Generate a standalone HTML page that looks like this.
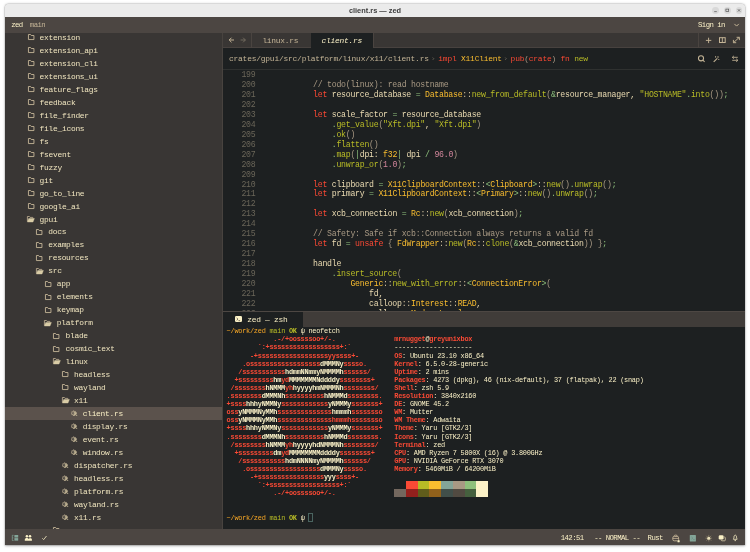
<!DOCTYPE html>
<html><head><meta charset="utf-8"><title>client.rs — zed</title>
<style>
html,body{margin:0;padding:0;}
body{width:750px;height:552px;background:#fff;overflow:hidden;position:relative;font-family:"Liberation Mono",monospace;}
.abs{position:absolute;}
#win{position:absolute;left:4.7px;top:3.55px;width:740.3px;height:541.85px;background:#ebebeb;border-radius:3.5px 3.5px 0 0;overflow:hidden;box-shadow:0 0 0 0.3px rgba(0,0,0,.18),0 0.8px 2.5px rgba(0,0,0,.35);}
#in{will-change:transform;position:absolute;left:-4.7px;top:-3.55px;width:750px;height:552px;}
.mono{font-family:"Liberation Mono",monospace;white-space:pre;}
.ed{font-size:8.200px;letter-spacing:-0.2508px;line-height:10px;height:10px;color:#ebdbb2;}
.sb{font-size:7.900px;letter-spacing:-0.2608px;line-height:13px;height:13px;color:#f0e5bf;}
.tb{font-size:7.3px;letter-spacing:-0.5507px;line-height:10px;height:10px;color:#fbf1c7;}
.tm{font-size:6.900px;letter-spacing:-0.2407px;line-height:8px;height:8px;color:#fbf1c7;}
.k{color:#fb4934}.t{color:#fabd2f}.f{color:#b8bb26}.s{color:#b8bb26}.c{color:#a89984}.n{color:#d3869b}
.o{color:#8ec07c}.b{color:#a89984}.p{color:#d5c4a1}.d{color:#e5d5ad}
.r{color:#fb4a35;font-weight:bold}.w{color:#fbf1c7}.g{color:#b7bb26}.y{color:#f9a825}
.ln{color:#6b6659;}
svg{position:absolute;overflow:visible}
</style></head><body>
<div id="win"><div id="in">
<div class="abs" style="left:0.00px;top:0.00px;width:750.00px;height:17.50px;background:#ebebeb;"></div>
<div class="abs" style="left:0.00px;top:16.80px;width:750.00px;height:16.20px;background:#4c4642;"></div>
<div class="abs" style="left:0.00px;top:32.50px;width:222.50px;height:497.00px;background:#393634;"></div>
<div class="abs" style="left:222.00px;top:47.00px;width:530.00px;height:483.00px;background:#1d2021;"></div>
<div class="abs" style="left:222.00px;top:32.50px;width:530.00px;height:15.60px;background:#393634;"></div>
<div class="abs" style="left:222.60px;top:47.40px;width:530.00px;height:0.70px;background:#48423f;"></div>
<div class="abs" style="left:251.00px;top:33.00px;width:0.70px;height:15.00px;background:#4a4440;"></div>
<div class="abs" style="left:310.60px;top:33.00px;width:0.70px;height:15.00px;background:#4a4440;"></div>
<div class="abs" style="left:311.20px;top:33.00px;width:61.80px;height:15.40px;background:#1d2021;"></div>
<div class="abs" style="left:373.00px;top:33.00px;width:0.70px;height:15.00px;background:#4a4440;"></div>
<div class="abs" style="left:698.10px;top:33.00px;width:0.70px;height:15.00px;background:#4a4440;"></div>
<div class="abs" style="left:222.60px;top:68.60px;width:530.00px;height:0.70px;background:#2f3130;"></div>
<div class="abs" style="left:222.60px;top:310.80px;width:530.00px;height:1.10px;background:#4d4743;"></div>
<div class="abs" style="left:222.60px;top:311.80px;width:530.00px;height:15.00px;background:#403c39;"></div>
<div class="abs" style="left:222.60px;top:311.90px;width:80.40px;height:15.20px;background:#1d2021;"></div>
<div class="abs" style="left:222.30px;top:33.00px;width:0.90px;height:496.00px;background:#48433f;"></div>
<div class="abs" style="left:0.00px;top:528.90px;width:750.00px;height:20.00px;background:#4c4642;"></div>
<div class="abs" style="left:300px;top:5.2px;width:150px;height:12px;line-height:12px;text-align:center;font-family:'Liberation Sans',sans-serif;font-weight:bold;font-size:7.4px;color:#3d3d3d;">client.rs — zed</div>
<div class="abs" style="left:712.10px;top:6.90px;width:6.8px;height:6.8px;border-radius:50%;background:#d9d9d9;"></div>
<div class="abs" style="left:723.90px;top:6.90px;width:6.8px;height:6.8px;border-radius:50%;background:#d9d9d9;"></div>
<div class="abs" style="left:735.60px;top:6.90px;width:6.8px;height:6.8px;border-radius:50%;background:#d9d9d9;"></div>
<svg style="left:0;top:0" width="750" height="20"><g stroke="#4a4a4a" stroke-width="0.65" fill="none"><path d="M714.2 11.6h2.6"/><rect x="725.9" y="9.1" width="2.8" height="2.5"/><path d="M737.8 9.2l2.4 2.4M740.2 9.2l-2.4 2.4"/></g></svg>
<div class="abs mono tb" style="left:11.20px;top:20px;color:#fbf1c7">zed</div>
<div class="abs mono tb" style="left:29.80px;top:20px;color:#c5b597">main</div>
<div class="abs mono tb" style="left:698.00px;top:20px;color:#fbf1c7">Sign in</div>
<svg style="left:0;top:0" width="750" height="40"><path d="M734.4 23.9l2.2 2.2 2.2-2.2" stroke="#c5b597" stroke-width="1" fill="none"/></svg>
<div class="abs" style="left:0;top:33px;width:221.8px;height:496px;overflow:hidden;"><div class="abs" style="left:0;top:-33px;width:222px;height:552px;">
<svg style="left:27.55px;top:34.35px" width="8" height="7" viewBox="0 0 8 7"><path d="M0.45 0.5h2.1l0.7 1h2.7v4.05h-5.5z" fill="none" stroke="#c5b597" stroke-width="0.9" stroke-linejoin="round"/></svg><div class="abs mono sb" style="left:39.60px;top:31px;">extension</div>
<svg style="left:27.55px;top:47.31px" width="8" height="7" viewBox="0 0 8 7"><path d="M0.45 0.5h2.1l0.7 1h2.7v4.05h-5.5z" fill="none" stroke="#c5b597" stroke-width="0.9" stroke-linejoin="round"/></svg><div class="abs mono sb" style="left:39.60px;top:44px;">extension_api</div>
<svg style="left:27.55px;top:60.28px" width="8" height="7" viewBox="0 0 8 7"><path d="M0.45 0.5h2.1l0.7 1h2.7v4.05h-5.5z" fill="none" stroke="#c5b597" stroke-width="0.9" stroke-linejoin="round"/></svg><div class="abs mono sb" style="left:39.60px;top:57px;">extension_cli</div>
<svg style="left:27.55px;top:73.24px" width="8" height="7" viewBox="0 0 8 7"><path d="M0.45 0.5h2.1l0.7 1h2.7v4.05h-5.5z" fill="none" stroke="#c5b597" stroke-width="0.9" stroke-linejoin="round"/></svg><div class="abs mono sb" style="left:39.60px;top:70px;">extensions_ui</div>
<svg style="left:27.55px;top:86.21px" width="8" height="7" viewBox="0 0 8 7"><path d="M0.45 0.5h2.1l0.7 1h2.7v4.05h-5.5z" fill="none" stroke="#c5b597" stroke-width="0.9" stroke-linejoin="round"/></svg><div class="abs mono sb" style="left:39.60px;top:83px;">feature_flags</div>
<svg style="left:27.55px;top:99.17px" width="8" height="7" viewBox="0 0 8 7"><path d="M0.45 0.5h2.1l0.7 1h2.7v4.05h-5.5z" fill="none" stroke="#c5b597" stroke-width="0.9" stroke-linejoin="round"/></svg><div class="abs mono sb" style="left:39.60px;top:96px;">feedback</div>
<svg style="left:27.55px;top:112.14px" width="8" height="7" viewBox="0 0 8 7"><path d="M0.45 0.5h2.1l0.7 1h2.7v4.05h-5.5z" fill="none" stroke="#c5b597" stroke-width="0.9" stroke-linejoin="round"/></svg><div class="abs mono sb" style="left:39.60px;top:109px;">file_finder</div>
<svg style="left:27.55px;top:125.11px" width="8" height="7" viewBox="0 0 8 7"><path d="M0.45 0.5h2.1l0.7 1h2.7v4.05h-5.5z" fill="none" stroke="#c5b597" stroke-width="0.9" stroke-linejoin="round"/></svg><div class="abs mono sb" style="left:39.60px;top:122px;">file_icons</div>
<svg style="left:27.55px;top:138.07px" width="8" height="7" viewBox="0 0 8 7"><path d="M0.45 0.5h2.1l0.7 1h2.7v4.05h-5.5z" fill="none" stroke="#c5b597" stroke-width="0.9" stroke-linejoin="round"/></svg><div class="abs mono sb" style="left:39.60px;top:135px;">fs</div>
<svg style="left:27.55px;top:151.03px" width="8" height="7" viewBox="0 0 8 7"><path d="M0.45 0.5h2.1l0.7 1h2.7v4.05h-5.5z" fill="none" stroke="#c5b597" stroke-width="0.9" stroke-linejoin="round"/></svg><div class="abs mono sb" style="left:39.60px;top:148px;">fsevent</div>
<svg style="left:27.55px;top:164.00px" width="8" height="7" viewBox="0 0 8 7"><path d="M0.45 0.5h2.1l0.7 1h2.7v4.05h-5.5z" fill="none" stroke="#c5b597" stroke-width="0.9" stroke-linejoin="round"/></svg><div class="abs mono sb" style="left:39.60px;top:161px;">fuzzy</div>
<svg style="left:27.55px;top:176.97px" width="8" height="7" viewBox="0 0 8 7"><path d="M0.45 0.5h2.1l0.7 1h2.7v4.05h-5.5z" fill="none" stroke="#c5b597" stroke-width="0.9" stroke-linejoin="round"/></svg><div class="abs mono sb" style="left:39.60px;top:174px;">git</div>
<svg style="left:27.55px;top:189.93px" width="8" height="7" viewBox="0 0 8 7"><path d="M0.45 0.5h2.1l0.7 1h2.7v4.05h-5.5z" fill="none" stroke="#c5b597" stroke-width="0.9" stroke-linejoin="round"/></svg><div class="abs mono sb" style="left:39.60px;top:187px;">go_to_line</div>
<svg style="left:27.55px;top:202.89px" width="8" height="7" viewBox="0 0 8 7"><path d="M0.45 0.5h2.1l0.7 1h2.7v4.05h-5.5z" fill="none" stroke="#c5b597" stroke-width="0.9" stroke-linejoin="round"/></svg><div class="abs mono sb" style="left:39.60px;top:200px;">google_ai</div>
<svg style="left:27.10px;top:215.86px" width="8" height="7" viewBox="0 0 8 7"><path d="M0.4 5.4v-4.9h2l0.7 0.9h2.7v1.1" fill="none" stroke="#c5b597" stroke-width="0.8" stroke-linejoin="round"/><path d="M1.7 2.5h5.7l-1.4 3.5h-5.6z" fill="#d9cca6" stroke="#d9cca6" stroke-width="0.4" stroke-linejoin="round"/></svg><div class="abs mono sb" style="left:39.60px;top:213px;">gpui</div>
<svg style="left:36.17px;top:228.82px" width="8" height="7" viewBox="0 0 8 7"><path d="M0.45 0.5h2.1l0.7 1h2.7v4.05h-5.5z" fill="none" stroke="#c5b597" stroke-width="0.9" stroke-linejoin="round"/></svg><div class="abs mono sb" style="left:48.22px;top:225px;">docs</div>
<svg style="left:36.17px;top:241.79px" width="8" height="7" viewBox="0 0 8 7"><path d="M0.45 0.5h2.1l0.7 1h2.7v4.05h-5.5z" fill="none" stroke="#c5b597" stroke-width="0.9" stroke-linejoin="round"/></svg><div class="abs mono sb" style="left:48.22px;top:238px;">examples</div>
<svg style="left:36.17px;top:254.75px" width="8" height="7" viewBox="0 0 8 7"><path d="M0.45 0.5h2.1l0.7 1h2.7v4.05h-5.5z" fill="none" stroke="#c5b597" stroke-width="0.9" stroke-linejoin="round"/></svg><div class="abs mono sb" style="left:48.22px;top:251px;">resources</div>
<svg style="left:35.72px;top:267.72px" width="8" height="7" viewBox="0 0 8 7"><path d="M0.4 5.4v-4.9h2l0.7 0.9h2.7v1.1" fill="none" stroke="#c5b597" stroke-width="0.8" stroke-linejoin="round"/><path d="M1.7 2.5h5.7l-1.4 3.5h-5.6z" fill="#d9cca6" stroke="#d9cca6" stroke-width="0.4" stroke-linejoin="round"/></svg><div class="abs mono sb" style="left:48.22px;top:264px;">src</div>
<svg style="left:44.79px;top:280.69px" width="8" height="7" viewBox="0 0 8 7"><path d="M0.45 0.5h2.1l0.7 1h2.7v4.05h-5.5z" fill="none" stroke="#c5b597" stroke-width="0.9" stroke-linejoin="round"/></svg><div class="abs mono sb" style="left:56.84px;top:277px;">app</div>
<svg style="left:44.79px;top:293.65px" width="8" height="7" viewBox="0 0 8 7"><path d="M0.45 0.5h2.1l0.7 1h2.7v4.05h-5.5z" fill="none" stroke="#c5b597" stroke-width="0.9" stroke-linejoin="round"/></svg><div class="abs mono sb" style="left:56.84px;top:290px;">elements</div>
<svg style="left:44.79px;top:306.61px" width="8" height="7" viewBox="0 0 8 7"><path d="M0.45 0.5h2.1l0.7 1h2.7v4.05h-5.5z" fill="none" stroke="#c5b597" stroke-width="0.9" stroke-linejoin="round"/></svg><div class="abs mono sb" style="left:56.84px;top:303px;">keymap</div>
<svg style="left:44.34px;top:319.58px" width="8" height="7" viewBox="0 0 8 7"><path d="M0.4 5.4v-4.9h2l0.7 0.9h2.7v1.1" fill="none" stroke="#c5b597" stroke-width="0.8" stroke-linejoin="round"/><path d="M1.7 2.5h5.7l-1.4 3.5h-5.6z" fill="#d9cca6" stroke="#d9cca6" stroke-width="0.4" stroke-linejoin="round"/></svg><div class="abs mono sb" style="left:56.84px;top:316px;">platform</div>
<svg style="left:53.41px;top:332.54px" width="8" height="7" viewBox="0 0 8 7"><path d="M0.45 0.5h2.1l0.7 1h2.7v4.05h-5.5z" fill="none" stroke="#c5b597" stroke-width="0.9" stroke-linejoin="round"/></svg><div class="abs mono sb" style="left:65.46px;top:329px;">blade</div>
<svg style="left:53.41px;top:345.51px" width="8" height="7" viewBox="0 0 8 7"><path d="M0.45 0.5h2.1l0.7 1h2.7v4.05h-5.5z" fill="none" stroke="#c5b597" stroke-width="0.9" stroke-linejoin="round"/></svg><div class="abs mono sb" style="left:65.46px;top:342px;">cosmic_text</div>
<svg style="left:52.96px;top:358.47px" width="8" height="7" viewBox="0 0 8 7"><path d="M0.4 5.4v-4.9h2l0.7 0.9h2.7v1.1" fill="none" stroke="#c5b597" stroke-width="0.8" stroke-linejoin="round"/><path d="M1.7 2.5h5.7l-1.4 3.5h-5.6z" fill="#d9cca6" stroke="#d9cca6" stroke-width="0.4" stroke-linejoin="round"/></svg><div class="abs mono sb" style="left:65.46px;top:355px;">linux</div>
<svg style="left:62.03px;top:371.44px" width="8" height="7" viewBox="0 0 8 7"><path d="M0.45 0.5h2.1l0.7 1h2.7v4.05h-5.5z" fill="none" stroke="#c5b597" stroke-width="0.9" stroke-linejoin="round"/></svg><div class="abs mono sb" style="left:74.08px;top:368px;">headless</div>
<svg style="left:62.03px;top:384.40px" width="8" height="7" viewBox="0 0 8 7"><path d="M0.45 0.5h2.1l0.7 1h2.7v4.05h-5.5z" fill="none" stroke="#c5b597" stroke-width="0.9" stroke-linejoin="round"/></svg><div class="abs mono sb" style="left:74.08px;top:381px;">wayland</div>
<svg style="left:61.58px;top:397.37px" width="8" height="7" viewBox="0 0 8 7"><path d="M0.4 5.4v-4.9h2l0.7 0.9h2.7v1.1" fill="none" stroke="#c5b597" stroke-width="0.8" stroke-linejoin="round"/><path d="M1.7 2.5h5.7l-1.4 3.5h-5.6z" fill="#d9cca6" stroke="#d9cca6" stroke-width="0.4" stroke-linejoin="round"/></svg><div class="abs mono sb" style="left:74.08px;top:394px;">x11</div>
<div class="abs" style="left:0.00px;top:406.88px;width:222.00px;height:12.96px;background:#5b524c;"></div>
<svg style="left:70.70px;top:410.33px" width="8" height="7" viewBox="0 0 8 7"><circle cx="2.7" cy="3.2" r="2.05" fill="none" stroke="#c5b597" stroke-width="1.15" stroke-dasharray="0.85 0.5"/><path d="M3.2 2v3.9M3.2 2.2h1.3a0.9 0.9 0 0 1 0 1.8h-1.3M4.4 4l1.7 2" stroke="#d9cca6" stroke-width="0.75" fill="none"/></svg><div class="abs mono sb" style="left:82.70px;top:407px;color:#fbf1c7">client.rs</div>
<svg style="left:70.70px;top:423.30px" width="8" height="7" viewBox="0 0 8 7"><circle cx="2.7" cy="3.2" r="2.05" fill="none" stroke="#c5b597" stroke-width="1.15" stroke-dasharray="0.85 0.5"/><path d="M3.2 2v3.9M3.2 2.2h1.3a0.9 0.9 0 0 1 0 1.8h-1.3M4.4 4l1.7 2" stroke="#d9cca6" stroke-width="0.75" fill="none"/></svg><div class="abs mono sb" style="left:82.70px;top:420px;">display.rs</div>
<svg style="left:70.70px;top:436.26px" width="8" height="7" viewBox="0 0 8 7"><circle cx="2.7" cy="3.2" r="2.05" fill="none" stroke="#c5b597" stroke-width="1.15" stroke-dasharray="0.85 0.5"/><path d="M3.2 2v3.9M3.2 2.2h1.3a0.9 0.9 0 0 1 0 1.8h-1.3M4.4 4l1.7 2" stroke="#d9cca6" stroke-width="0.75" fill="none"/></svg><div class="abs mono sb" style="left:82.70px;top:433px;">event.rs</div>
<svg style="left:70.70px;top:449.23px" width="8" height="7" viewBox="0 0 8 7"><circle cx="2.7" cy="3.2" r="2.05" fill="none" stroke="#c5b597" stroke-width="1.15" stroke-dasharray="0.85 0.5"/><path d="M3.2 2v3.9M3.2 2.2h1.3a0.9 0.9 0 0 1 0 1.8h-1.3M4.4 4l1.7 2" stroke="#d9cca6" stroke-width="0.75" fill="none"/></svg><div class="abs mono sb" style="left:82.70px;top:446px;">window.rs</div>
<svg style="left:62.08px;top:462.19px" width="8" height="7" viewBox="0 0 8 7"><circle cx="2.7" cy="3.2" r="2.05" fill="none" stroke="#c5b597" stroke-width="1.15" stroke-dasharray="0.85 0.5"/><path d="M3.2 2v3.9M3.2 2.2h1.3a0.9 0.9 0 0 1 0 1.8h-1.3M4.4 4l1.7 2" stroke="#d9cca6" stroke-width="0.75" fill="none"/></svg><div class="abs mono sb" style="left:74.08px;top:459px;">dispatcher.rs</div>
<svg style="left:62.08px;top:475.16px" width="8" height="7" viewBox="0 0 8 7"><circle cx="2.7" cy="3.2" r="2.05" fill="none" stroke="#c5b597" stroke-width="1.15" stroke-dasharray="0.85 0.5"/><path d="M3.2 2v3.9M3.2 2.2h1.3a0.9 0.9 0 0 1 0 1.8h-1.3M4.4 4l1.7 2" stroke="#d9cca6" stroke-width="0.75" fill="none"/></svg><div class="abs mono sb" style="left:74.08px;top:472px;">headless.rs</div>
<svg style="left:62.08px;top:488.12px" width="8" height="7" viewBox="0 0 8 7"><circle cx="2.7" cy="3.2" r="2.05" fill="none" stroke="#c5b597" stroke-width="1.15" stroke-dasharray="0.85 0.5"/><path d="M3.2 2v3.9M3.2 2.2h1.3a0.9 0.9 0 0 1 0 1.8h-1.3M4.4 4l1.7 2" stroke="#d9cca6" stroke-width="0.75" fill="none"/></svg><div class="abs mono sb" style="left:74.08px;top:485px;">platform.rs</div>
<svg style="left:62.08px;top:501.09px" width="8" height="7" viewBox="0 0 8 7"><circle cx="2.7" cy="3.2" r="2.05" fill="none" stroke="#c5b597" stroke-width="1.15" stroke-dasharray="0.85 0.5"/><path d="M3.2 2v3.9M3.2 2.2h1.3a0.9 0.9 0 0 1 0 1.8h-1.3M4.4 4l1.7 2" stroke="#d9cca6" stroke-width="0.75" fill="none"/></svg><div class="abs mono sb" style="left:74.08px;top:498px;">wayland.rs</div>
<svg style="left:62.08px;top:514.05px" width="8" height="7" viewBox="0 0 8 7"><circle cx="2.7" cy="3.2" r="2.05" fill="none" stroke="#c5b597" stroke-width="1.15" stroke-dasharray="0.85 0.5"/><path d="M3.2 2v3.9M3.2 2.2h1.3a0.9 0.9 0 0 1 0 1.8h-1.3M4.4 4l1.7 2" stroke="#d9cca6" stroke-width="0.75" fill="none"/></svg><div class="abs mono sb" style="left:74.08px;top:511px;">x11.rs</div>
<svg style="left:53.41px;top:527.02px" width="8" height="7" viewBox="0 0 8 7"><path d="M0.45 0.5h2.1l0.7 1h2.7v4.05h-5.5z" fill="none" stroke="#c5b597" stroke-width="0.9" stroke-linejoin="round"/></svg><div class="abs mono sb" style="left:65.46px;top:524px;">mac</div>
</div></div>
<div class="abs mono sb" style="left:262.40px;top:34px;color:#c5b597">linux.rs</div>
<div class="abs mono sb" style="left:321.60px;top:34px;color:#fbf1c7;font-style:italic">client.rs</div>
<svg style="left:0;top:0" width="750" height="70"><g fill="none" stroke-width="0.85" stroke="#c5b597"><path d="M229.2 40h4.8M231.5 37.7l-2.3 2.3 2.3 2.3" stroke-width="0.95"/><path d="M240.6 40h4.8M243.1 37.7l2.3 2.3-2.3 2.3" stroke="#7a7163"/><path d="M705.9 40.4h5.4M708.6 37.7v5.4" stroke-width="0.95"/><rect x="719.5" y="37.7" width="5.7" height="4.8" stroke-width="1"/><path d="M722.35 37.7v4.8" stroke-width="0.9"/><path d="M733.6 42.6l5.6-5.2M736.6 37.3h2.8v2.8M733.4 39.9v2.8h2.8" stroke-width="0.95"/><circle cx="701" cy="58.3" r="2.55" stroke-width="1.05"/><path d="M702.9 60.2l1.7 1.6" stroke-width="1.05"/><path d="M713.7 61.9l3.6-3.6" stroke-width="1.05"/><path d="M715.6 56v1.7M718 56v2.1" stroke-width="0.8"/><circle cx="718.8" cy="59.5" r="0.6" fill="#c5b597" stroke="none"/><path d="M732.4 57.3h5.4M737.8 60.3h-5.6M733.9 55.9l-1.6 1.4 1.6 1.4M736.2 58.8l1.7 1.5-1.7 1.5" stroke-width="0.85"/></g></svg>
<div class="abs mono sb" style="left:229.00px;top:52px;letter-spacing:-0.1958px"><span style="color:#c5b597">crates/gpui/src/platform/linux/x11/client.rs</span></div>
<div class="abs mono sb" style="left:438.30px;top:52px;letter-spacing:-0.1958px"><span class="k">impl</span> <span class="t">X11Client</span></div>
<div class="abs mono sb" style="left:510.60px;top:52px;letter-spacing:-0.1958px"><span class="k">pub</span><span class="b">(</span><span class="k">crate</span><span class="b">)</span> <span class="k">fn</span> <span class="f">new</span></div>
<svg style="left:0;top:0" width="750" height="70"><path d="M432.7 57.5l1.1 1.2-1.1 1.2M505.2 57.5l1.1 1.2-1.1 1.2" stroke="#857a69" stroke-width="0.65" fill="none"/></svg>
<div class="abs" style="left:222.6px;top:69.3px;width:530px;height:241.6px;overflow:hidden;"><div class="abs" style="left:-222.6px;top:-69.3px;width:750px;height:552px;">
<div class="abs mono ed ln" style="left:241.40px;top:70px;">199</div>
<div class="abs mono ed ln" style="left:241.40px;top:80px;">200</div>
<div class="abs mono ed" style="left:275.80px;top:80px;">        <span class="c">// todo(linux): read hostname</span></div>
<div class="abs mono ed ln" style="left:241.40px;top:90px;">201</div>
<div class="abs mono ed" style="left:275.80px;top:90px;">        <span class="k">let</span> resource_database <span class="o">=</span> <span class="t">Database</span><span class="p">::</span><span class="f">new_from_default</span><span class="b">(</span><span class="o">&amp;</span>resource_manager<span class="d">,</span> <span class="s">"HOSTNAME"</span><span class="o">.</span><span class="f">into</span><span class="b">())</span><span class="o">;</span></div>
<div class="abs mono ed ln" style="left:241.40px;top:100px;">202</div>
<div class="abs mono ed ln" style="left:241.40px;top:110px;">203</div>
<div class="abs mono ed" style="left:275.80px;top:110px;">        <span class="k">let</span> scale_factor <span class="o">=</span> resource_database</div>
<div class="abs mono ed ln" style="left:241.40px;top:120px;">204</div>
<div class="abs mono ed" style="left:275.80px;top:120px;">            <span class="o">.</span><span class="f">get_value</span><span class="b">(</span><span class="s">"Xft.dpi"</span><span class="d">,</span> <span class="s">"Xft.dpi"</span><span class="b">)</span></div>
<div class="abs mono ed ln" style="left:241.40px;top:130px;">205</div>
<div class="abs mono ed" style="left:275.80px;top:130px;">            <span class="o">.</span><span class="f">ok</span><span class="b">()</span></div>
<div class="abs mono ed ln" style="left:241.40px;top:140px;">206</div>
<div class="abs mono ed" style="left:275.80px;top:140px;">            <span class="o">.</span><span class="f">flatten</span><span class="b">()</span></div>
<div class="abs mono ed ln" style="left:241.40px;top:150px;">207</div>
<div class="abs mono ed" style="left:275.80px;top:150px;">            <span class="o">.</span><span class="f">map</span><span class="b">(</span><span class="o">|</span>dpi<span class="d">:</span> <span class="t">f32</span><span class="o">|</span> dpi <span class="o">/</span> <span class="n">96.0</span><span class="b">)</span></div>
<div class="abs mono ed ln" style="left:241.40px;top:160px;">208</div>
<div class="abs mono ed" style="left:275.80px;top:160px;">            <span class="o">.</span><span class="f">unwrap_or</span><span class="b">(</span><span class="n">1.0</span><span class="b">)</span><span class="o">;</span></div>
<div class="abs mono ed ln" style="left:241.40px;top:170px;">209</div>
<div class="abs mono ed ln" style="left:241.40px;top:180px;">210</div>
<div class="abs mono ed" style="left:275.80px;top:180px;">        <span class="k">let</span> clipboard <span class="o">=</span> <span class="t">X11ClipboardContext</span><span class="p">::</span><span class="o">&lt;</span><span class="t">Clipboard</span><span class="o">&gt;</span><span class="p">::</span><span class="f">new</span><span class="b">()</span><span class="o">.</span><span class="f">unwrap</span><span class="b">()</span><span class="o">;</span></div>
<div class="abs mono ed ln" style="left:241.40px;top:189px;">211</div>
<div class="abs mono ed" style="left:275.80px;top:189px;">        <span class="k">let</span> primary <span class="o">=</span> <span class="t">X11ClipboardContext</span><span class="p">::</span><span class="o">&lt;</span><span class="t">Primary</span><span class="o">&gt;</span><span class="p">::</span><span class="f">new</span><span class="b">()</span><span class="o">.</span><span class="f">unwrap</span><span class="b">()</span><span class="o">;</span></div>
<div class="abs mono ed ln" style="left:241.40px;top:199px;">212</div>
<div class="abs mono ed ln" style="left:241.40px;top:209px;">213</div>
<div class="abs mono ed" style="left:275.80px;top:209px;">        <span class="k">let</span> xcb_connection <span class="o">=</span> <span class="t">Rc</span><span class="p">::</span><span class="f">new</span><span class="b">(</span>xcb_connection<span class="b">)</span><span class="o">;</span></div>
<div class="abs mono ed ln" style="left:241.40px;top:219px;">214</div>
<div class="abs mono ed ln" style="left:241.40px;top:229px;">215</div>
<div class="abs mono ed" style="left:275.80px;top:229px;">        <span class="c">// Safety: Safe if xcb::Connection always returns a valid fd</span></div>
<div class="abs mono ed ln" style="left:241.40px;top:239px;">216</div>
<div class="abs mono ed" style="left:275.80px;top:239px;">        <span class="k">let</span> fd <span class="o">=</span> <span class="k">unsafe</span> <span class="b">{</span> <span class="t">FdWrapper</span><span class="p">::</span><span class="f">new</span><span class="b">(</span><span class="t">Rc</span><span class="p">::</span><span class="f">clone</span><span class="b">(</span><span class="o">&amp;</span>xcb_connection<span class="b">))</span> <span class="b">}</span><span class="o">;</span></div>
<div class="abs mono ed ln" style="left:241.40px;top:249px;">217</div>
<div class="abs mono ed ln" style="left:241.40px;top:259px;">218</div>
<div class="abs mono ed" style="left:275.80px;top:259px;">        handle</div>
<div class="abs mono ed ln" style="left:241.40px;top:269px;">219</div>
<div class="abs mono ed" style="left:275.80px;top:269px;">            <span class="o">.</span><span class="f">insert_source</span><span class="b">(</span></div>
<div class="abs mono ed ln" style="left:241.40px;top:279px;">220</div>
<div class="abs mono ed" style="left:275.80px;top:279px;">                <span class="t">Generic</span><span class="p">::</span><span class="f">new_with_error</span><span class="p">::</span><span class="o">&lt;</span><span class="t">ConnectionError</span><span class="o">&gt;</span><span class="b">(</span></div>
<div class="abs mono ed ln" style="left:241.40px;top:289px;">221</div>
<div class="abs mono ed" style="left:275.80px;top:289px;">                    fd<span class="d">,</span></div>
<div class="abs mono ed ln" style="left:241.40px;top:299px;">222</div>
<div class="abs mono ed" style="left:275.80px;top:299px;">                    calloop<span class="p">::</span><span class="t">Interest</span><span class="p">::</span><span class="t">READ</span><span class="d">,</span></div>
<div class="abs mono ed ln" style="left:241.40px;top:309px;">223</div>
<div class="abs mono ed" style="left:275.80px;top:309px;">                    calloop<span class="p">::</span><span class="t">Mode</span><span class="p">::</span><span class="t">Level</span><span class="d">,</span></div>
</div></div>
<div class="abs" style="left:235.2px;top:315.9px;width:6.8px;height:6.5px;border-radius:1.2px;background:#fbf1c7;"></div><svg style="left:235.3px;top:315.9px" width="6.6" height="6.6" viewBox="0 0 6.6 6.6"><path d="M1.7 2l1.3 1.2-1.3 1.2M3.5 4.7h1.6" stroke="#393634" stroke-width="0.7" fill="none"/></svg>
<div class="abs mono sb" style="left:247.20px;top:313px;color:#fbf1c7">zed — zsh</div>
<div class="abs mono tm" style="left:226.60px;top:327px;"><span class="y">~/work/zed</span> <span class="g">main</span> <span class="g" style="font-weight:bold">OK</span> ψ neofetch</div>
<div class="abs mono tm" style="left:226.60px;top:335px;"><span class="r">            .-/+oossssoo+/-.</span></div>
<div class="abs mono tm" style="left:226.60px;top:343px;"><span class="r">        `:+ssssssssssssssssss+:`</span></div>
<div class="abs mono tm" style="left:226.60px;top:352px;"><span class="r">      -+ssssssssssssssssssyyssss+-</span></div>
<div class="abs mono tm" style="left:226.60px;top:360px;"><span class="r">    .ossssssssssssssssss</span><span class="w" style="font-weight:bold">dMMMNy</span><span class="r">sssso.</span></div>
<div class="abs mono tm" style="left:226.60px;top:368px;"><span class="r">   /sssssssssss</span><span class="w" style="font-weight:bold">hdmmNNmmyNMMMMh</span><span class="r">ssssss/</span></div>
<div class="abs mono tm" style="left:226.60px;top:376px;"><span class="r">  +sssssssss</span><span class="w" style="font-weight:bold">hm</span><span class="r">yd</span><span class="w" style="font-weight:bold">MMMMMMMNddddy</span><span class="r">ssssssss+</span></div>
<div class="abs mono tm" style="left:226.60px;top:384px;"><span class="r"> /ssssssss</span><span class="w" style="font-weight:bold">hNMMM</span><span class="r">yh</span><span class="w" style="font-weight:bold">hyyyyhmNMMMNh</span><span class="r">ssssssss/</span></div>
<div class="abs mono tm" style="left:226.60px;top:392px;"><span class="r">.ssssssss</span><span class="w" style="font-weight:bold">dMMMNh</span><span class="r">ssssssssss</span><span class="w" style="font-weight:bold">hNMMMd</span><span class="r">ssssssss.</span></div>
<div class="abs mono tm" style="left:226.60px;top:400px;"><span class="r">+ssss</span><span class="w" style="font-weight:bold">hhhyNMMNy</span><span class="r">ssssssssssss</span><span class="w" style="font-weight:bold">yNMMMy</span><span class="r">sssssss+</span></div>
<div class="abs mono tm" style="left:226.60px;top:408px;"><span class="r">oss</span><span class="w" style="font-weight:bold">yNMMMNyMMh</span><span class="r">ssssssssssssss</span><span class="w" style="font-weight:bold">hmmmh</span><span class="r">ssssssso</span></div>
<div class="abs mono tm" style="left:226.60px;top:416px;"><span class="r">oss</span><span class="w" style="font-weight:bold">yNMMMNyMMh</span><span class="r">sssssssssssssshmmmhssssssso</span></div>
<div class="abs mono tm" style="left:226.60px;top:424px;"><span class="r">+ssss</span><span class="w" style="font-weight:bold">hhhyNMMNy</span><span class="r">ssssssssssss</span><span class="w" style="font-weight:bold">yNMMMy</span><span class="r">sssssss+</span></div>
<div class="abs mono tm" style="left:226.60px;top:433px;"><span class="r">.ssssssss</span><span class="w" style="font-weight:bold">dMMMNh</span><span class="r">ssssssssss</span><span class="w" style="font-weight:bold">hNMMMd</span><span class="r">ssssssss.</span></div>
<div class="abs mono tm" style="left:226.60px;top:441px;"><span class="r"> /ssssssss</span><span class="w" style="font-weight:bold">hNMMM</span><span class="r">yh</span><span class="w" style="font-weight:bold">hyyyyhdNMMMNh</span><span class="r">ssssssss/</span></div>
<div class="abs mono tm" style="left:226.60px;top:449px;"><span class="r">  +sssssssss</span><span class="w" style="font-weight:bold">dm</span><span class="r">yd</span><span class="w" style="font-weight:bold">MMMMMMMMddddy</span><span class="r">ssssssss+</span></div>
<div class="abs mono tm" style="left:226.60px;top:457px;"><span class="r">   /sssssssssss</span><span class="w" style="font-weight:bold">hdmNNNNmyNMMMMh</span><span class="r">ssssss/</span></div>
<div class="abs mono tm" style="left:226.60px;top:465px;"><span class="r">    .ossssssssssssssssss</span><span class="w" style="font-weight:bold">dMMMNy</span><span class="r">sssso.</span></div>
<div class="abs mono tm" style="left:226.60px;top:473px;"><span class="r">      -+sssssssssssssssss</span><span class="w" style="font-weight:bold">yyy</span><span class="r">ssss+-</span></div>
<div class="abs mono tm" style="left:226.60px;top:481px;"><span class="r">        `:+ssssssssssssssssss+:`</span></div>
<div class="abs mono tm" style="left:226.60px;top:489px;"><span class="r">            .-/+oossssoo+/-.</span></div>
<div class="abs mono tm" style="left:394.30px;top:335px;"><span class="r">mrnugget</span>@<span class="r">greyunixbox</span></div>
<div class="abs mono tm" style="left:394.30px;top:343px;">--------------------</div>
<div class="abs mono tm" style="left:394.30px;top:352px;"><span class="r">OS</span>: Ubuntu 23.10 x86_64</div>
<div class="abs mono tm" style="left:394.30px;top:360px;"><span class="r">Kernel</span>: 6.5.0-28-generic</div>
<div class="abs mono tm" style="left:394.30px;top:368px;"><span class="r">Uptime</span>: 2 mins</div>
<div class="abs mono tm" style="left:394.30px;top:376px;"><span class="r">Packages</span>: 4273 (dpkg), 46 (nix-default), 37 (flatpak), 22 (snap)</div>
<div class="abs mono tm" style="left:394.30px;top:384px;"><span class="r">Shell</span>: zsh 5.9</div>
<div class="abs mono tm" style="left:394.30px;top:392px;"><span class="r">Resolution</span>: 3840x2160</div>
<div class="abs mono tm" style="left:394.30px;top:400px;"><span class="r">DE</span>: GNOME 45.2</div>
<div class="abs mono tm" style="left:394.30px;top:408px;"><span class="r">WM</span>: Mutter</div>
<div class="abs mono tm" style="left:394.30px;top:416px;"><span class="r">WM Theme</span>: Adwaita</div>
<div class="abs mono tm" style="left:394.30px;top:424px;"><span class="r">Theme</span>: Yaru [GTK2/3]</div>
<div class="abs mono tm" style="left:394.30px;top:433px;"><span class="r">Icons</span>: Yaru [GTK2/3]</div>
<div class="abs mono tm" style="left:394.30px;top:441px;"><span class="r">Terminal</span>: zed</div>
<div class="abs mono tm" style="left:394.30px;top:449px;"><span class="r">CPU</span>: AMD Ryzen 7 5800X (16) @ 3.800GHz</div>
<div class="abs mono tm" style="left:394.30px;top:457px;"><span class="r">GPU</span>: NVIDIA GeForce RTX 3070</div>
<div class="abs mono tm" style="left:394.30px;top:465px;"><span class="r">Memory</span>: 5460MiB / 64200MiB</div>
<div class="abs" style="left:394.30px;top:481.19px;width:11.75px;height:8.11px;background:#1d2021;"></div>
<div class="abs" style="left:394.30px;top:489.30px;width:11.75px;height:8.11px;background:#73675e;"></div>
<div class="abs" style="left:406.00px;top:481.19px;width:11.75px;height:8.11px;background:#fb4a35;"></div>
<div class="abs" style="left:406.00px;top:489.30px;width:11.75px;height:8.11px;background:#93201d;"></div>
<div class="abs" style="left:417.70px;top:481.19px;width:11.75px;height:8.11px;background:#b7bb26;"></div>
<div class="abs" style="left:417.70px;top:489.30px;width:11.75px;height:8.11px;background:#605c1b;"></div>
<div class="abs" style="left:429.40px;top:481.19px;width:11.75px;height:8.11px;background:#f9bd2f;"></div>
<div class="abs" style="left:429.40px;top:489.30px;width:11.75px;height:8.11px;background:#91611b;"></div>
<div class="abs" style="left:441.10px;top:481.19px;width:11.75px;height:8.11px;background:#83a598;"></div>
<div class="abs" style="left:441.10px;top:489.30px;width:11.75px;height:8.11px;background:#414f4a;"></div>
<div class="abs" style="left:452.80px;top:481.19px;width:11.75px;height:8.11px;background:#a89984;"></div>
<div class="abs" style="left:452.80px;top:489.30px;width:11.75px;height:8.11px;background:#514a41;"></div>
<div class="abs" style="left:464.50px;top:481.19px;width:11.75px;height:8.11px;background:#8ec07c;"></div>
<div class="abs" style="left:464.50px;top:489.30px;width:11.75px;height:8.11px;background:#45603e;"></div>
<div class="abs" style="left:476.20px;top:481.19px;width:11.75px;height:8.11px;background:#fbf1c7;"></div>
<div class="abs" style="left:476.20px;top:489.30px;width:11.75px;height:8.11px;background:#fbf1c7;"></div>
<div class="abs mono tm" style="left:226.60px;top:514px;"><span class="y">~/work/zed</span> <span class="g">main</span> <span class="g" style="font-weight:bold">OK</span> ψ</div>
<div class="abs" style="left:308.30px;top:513.12px;width:4.3px;height:8.4px;border:0.7px solid #4a6460;box-sizing:border-box;"></div>
<div class="abs mono tb" style="left:560.70px;top:533px;color:#fbf1c7">142:51</div>
<div class="abs mono tb" style="left:594.20px;top:533px;color:#fbf1c7">-- NORMAL --</div>
<div class="abs mono tb" style="left:647.60px;top:533px;color:#fbf1c7">Rust</div>
<svg style="left:0;top:520px" width="750" height="32" viewBox="0 520 750 32"><g fill="none" stroke-width="0.8"><path d="M13.6 535.3h-1.3v5.2h1.3M12.3 537.9h1.1" stroke="#83a598" stroke-width="0.7"/><rect x="14.4" y="535" width="3.8" height="2.55" fill="#83a598" stroke="none"/><rect x="14.4" y="538.1" width="3.8" height="2.55" fill="#83a598" stroke="none"/><circle cx="26.9" cy="536.3" r="1.25" fill="#fbf1c7" stroke="none"/><circle cx="30" cy="536.3" r="1.25" fill="#fbf1c7" stroke="none"/><path d="M24.8 540.8v-1.2c0-2 4-2 4 0v1.2zM28.6 540.8v-1.2c0-1.9 3.3-1.9 3.3 0v1.2z" fill="#fbf1c7" stroke="none"/><path d="M42.3 538.3l1.4 1.3 2.8-3.6" stroke="#e3d9b5" stroke-width="0.9"/><rect x="672.8" y="536.4" width="5.8" height="4.4" rx="1.4" stroke="#c5b597" stroke-width="0.9"/><path d="M673.9 536.2c0-1.5 3.6-1.5 3.6 0M672.8 538.4h5.8" stroke="#c5b597" stroke-width="0.8"/><circle cx="678.6" cy="541.2" r="1.35" fill="#fbf1c7" stroke="#4c4642" stroke-width="0.4"/><rect x="689.8" y="535" width="6.1" height="6.4" rx="0.5" fill="#83a598" stroke="none"/><path d="M691.5 537l1.2 1.1-1.2 1.1M693.2 539.6h1.4" stroke="#5f7d75" stroke-width="0.6"/><path d="M708.8 534.9v6.6M705.5 538.2h6.6M706.4 535.8l4.8 4.8M711.2 535.8l-4.8 4.8" stroke="#a39778" stroke-width="0.6"/><circle cx="708.8" cy="538.2" r="1.5" fill="#e9dfb9" stroke="none"/><path d="M724.2 537h0.3a0.8 0.8 0 0 1 0.8 0.8v2.2a0.8 0.8 0 0 1-0.8 0.8h-2.5a0.8 0.8 0 0 1-0.8-0.8v-0.3" stroke="#d8cca8" stroke-width="0.8"/><rect x="718.7" y="535.2" width="4.9" height="4.4" rx="1.3" fill="#fbf1c7" stroke="none"/><path d="M733.4 539.3c0-.8.6-.9.6-2.3 0-2.4 2.5-2.4 2.5 0 0 1.4.6 1.5.6 2.3zM734.5 540.6h1.5" stroke="#fbf1c7" stroke-width="0.8"/></g></svg>
</div></div>
</body></html>
